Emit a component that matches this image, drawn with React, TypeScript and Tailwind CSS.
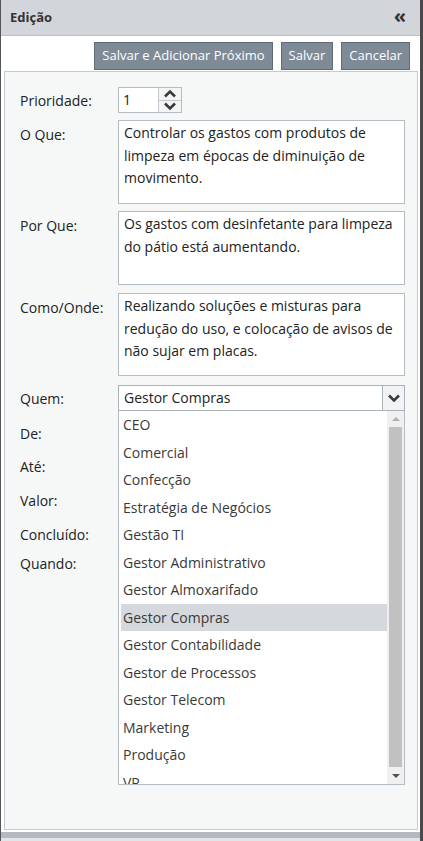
import { ReactNode } from "react";

const font = { fontFamily: '"Open Sans", "Noto Sans", sans-serif' };

const options = [
  "CEO",
  "Comercial",
  "Confecção",
  "Estratégia de Negócios",
  "Gestão TI",
  "Gestor Administrativo",
  "Gestor Almoxarifado",
  "Gestor Compras",
  "Gestor Contabilidade",
  "Gestor de Processos",
  "Gestor Telecom",
  "Marketing",
  "Produção",
  "VP",
];

function Row({ label, h, children, top }: { label: string; h: string; children?: ReactNode; top?: boolean }) {
  return (
    <div className={`flex ${h} ${top ? "items-start" : "items-center"}`}>
      <div className={`w-[98px] shrink-0 text-[#222] ${top ? "pt-[4px]" : ""}`}>{label}</div>
      {children}
    </div>
  );
}

function TextBox({ text, h }: { text: string; h: string }) {
  return (
    <div className={`w-[287px] ${h} border border-[#b4bcc4] bg-white px-[5px] py-[1px] leading-[22.5px] text-[#222]`}>
      {text}
    </div>
  );
}

function Chevron({ up }: { up?: boolean }) {
  return (
    <svg width="14" height="9" viewBox="0 0 14 9">
      <path
        d={up ? "M2 7.5 L7 2.5 L12 7.5" : "M2 1.5 L7 6.5 L12 1.5"}
        fill="none"
        stroke="#3a3a3a"
        strokeWidth="2.6"
      />
    </svg>
  );
}

export default function App() {
  return (
    <div style={font} className="w-[423px] h-[841px] flex flex-col bg-[#c9ced3] border-l border-l-[#555] border-r-[3px] border-r-[#4a4a4a] text-[14px] overflow-hidden">
      <div className="h-[36px] shrink-0 flex items-center justify-between pl-[9px] pr-[14px] bg-[#d2d6da] border-b border-[#b9bfc5]">
        <span className="font-bold text-[13px] text-[#333]">Edição</span>
        <span className="text-[20px] font-bold text-[#333] leading-none -mt-[3px]">«</span>
      </div>
      <div className="flex-1 flex flex-col bg-white pl-[3px] pr-[2px]">
        <div className="h-[35px] shrink-0 flex items-start justify-end gap-[8px] pt-[6px] pr-[8px]">
          <button className="h-[28px] px-[7px] bg-[#7e8b97] border border-[#5f6c77] text-white text-[13px]">Salvar e Adicionar Próximo</button>
          <button className="h-[28px] px-[7px] bg-[#7e8b97] border border-[#5f6c77] text-white text-[13px]">Salvar</button>
          <button className="h-[28px] px-[7px] bg-[#7e8b97] border border-[#5f6c77] text-white text-[13px]">Cancelar</button>
        </div>
        <div className="flex-1 bg-[#f6f8f8] border border-[#c3ccd4] pl-[15px] pt-[15px] flex flex-col">
          <Row label="Prioridade:" h="h-[26px]">
            <div className="flex h-[26px] border border-[#b4bcc4] bg-white">
              <div className="w-[39px] px-[4px] leading-[24px] text-[#222]">1</div>
              <div className="w-[23px] flex flex-col border-l border-[#c3c9cf] bg-[#f3f4f5]">
                <div className="flex-1 flex items-center justify-center border-b border-[#c3c9cf]"><Chevron up /></div>
                <div className="flex-1 flex items-center justify-center"><Chevron /></div>
              </div>
            </div>
          </Row>
          <div className="h-[7px]" />
          <Row label="O Que:" h="h-[84px]" top>
            <TextBox h="h-[84px]" text="Controlar os gastos com produtos de limpeza em épocas de diminuição de movimento." />
          </Row>
          <div className="h-[7px]" />
          <Row label="Por Que:" h="h-[74px]" top>
            <TextBox h="h-[74px]" text="Os gastos com desinfetante para limpeza do pátio está aumentando." />
          </Row>
          <div className="h-[8px]" />
          <Row label="Como/Onde:" h="h-[83px]" top>
            <TextBox h="h-[83px]" text="Realizando soluções e misturas para redução do uso, e colocação de avisos de não sujar em placas." />
          </Row>
          <div className="h-[9px]" />
          <Row label="Quem:" h="h-[26px]">
            <div className="relative">
              <div className="w-[287px] h-[26px] flex border border-[#a9b2bb] bg-white">
                <div className="flex-1 px-[5px] leading-[24px] text-[#222]">Gestor Compras</div>
                <div className="w-[22px] flex items-center justify-center border-l border-[#a9b2bb] bg-[#f2f3f4]"><Chevron /></div>
              </div>
              <div className="absolute left-0 top-[26px] z-10 w-[287px] h-[374px] flex border border-t-0 border-[#b4bcc4] bg-white">
                <div className="flex-1 overflow-hidden pl-[2px]">
                  {options.map((o) => (
                    <div
                      key={o}
                      className={`h-[27.5px] shrink-0 leading-[27.5px] pl-[2px] text-[#3a3a3a] ${o === "Gestor Compras" ? "bg-[#d5d8dc]" : ""}`}
                    >
                      {o}
                    </div>
                  ))}
                </div>
                <div className="w-[17px] shrink-0 bg-[#f0f0f0] flex flex-col items-center">
                  <div className="h-[16px] flex items-center justify-center">
                    <div className="w-0 h-0 border-l-[4px] border-r-[4px] border-b-[4px] border-l-transparent border-r-transparent border-b-[#b0b0b0]" />
                  </div>
                  <div className="w-[13px] flex-1 bg-[#c1c1c1]" />
                  <div className="h-[17px] flex items-center justify-center">
                    <div className="w-0 h-0 border-l-[4px] border-r-[4px] border-t-[4px] border-l-transparent border-r-transparent border-t-[#505050]" />
                  </div>
                </div>
              </div>
            </div>
          </Row>
          <Row label="De:" h="h-[44px]" />
          <Row label="Até:" h="h-[22px]" />
          <Row label="Valor:" h="h-[46px]" />
          <Row label="Concluído:" h="h-[22px]" />
          <Row label="Quando:" h="h-[36px]" />
        </div>
        <div className="h-[2px] shrink-0 bg-white" />
      </div>
      <div className="h-[6px] shrink-0 bg-[#b3b9bf]" />
      <div className="h-[3px] shrink-0 bg-[#e2e5e8]" />
    </div>
  );
}
